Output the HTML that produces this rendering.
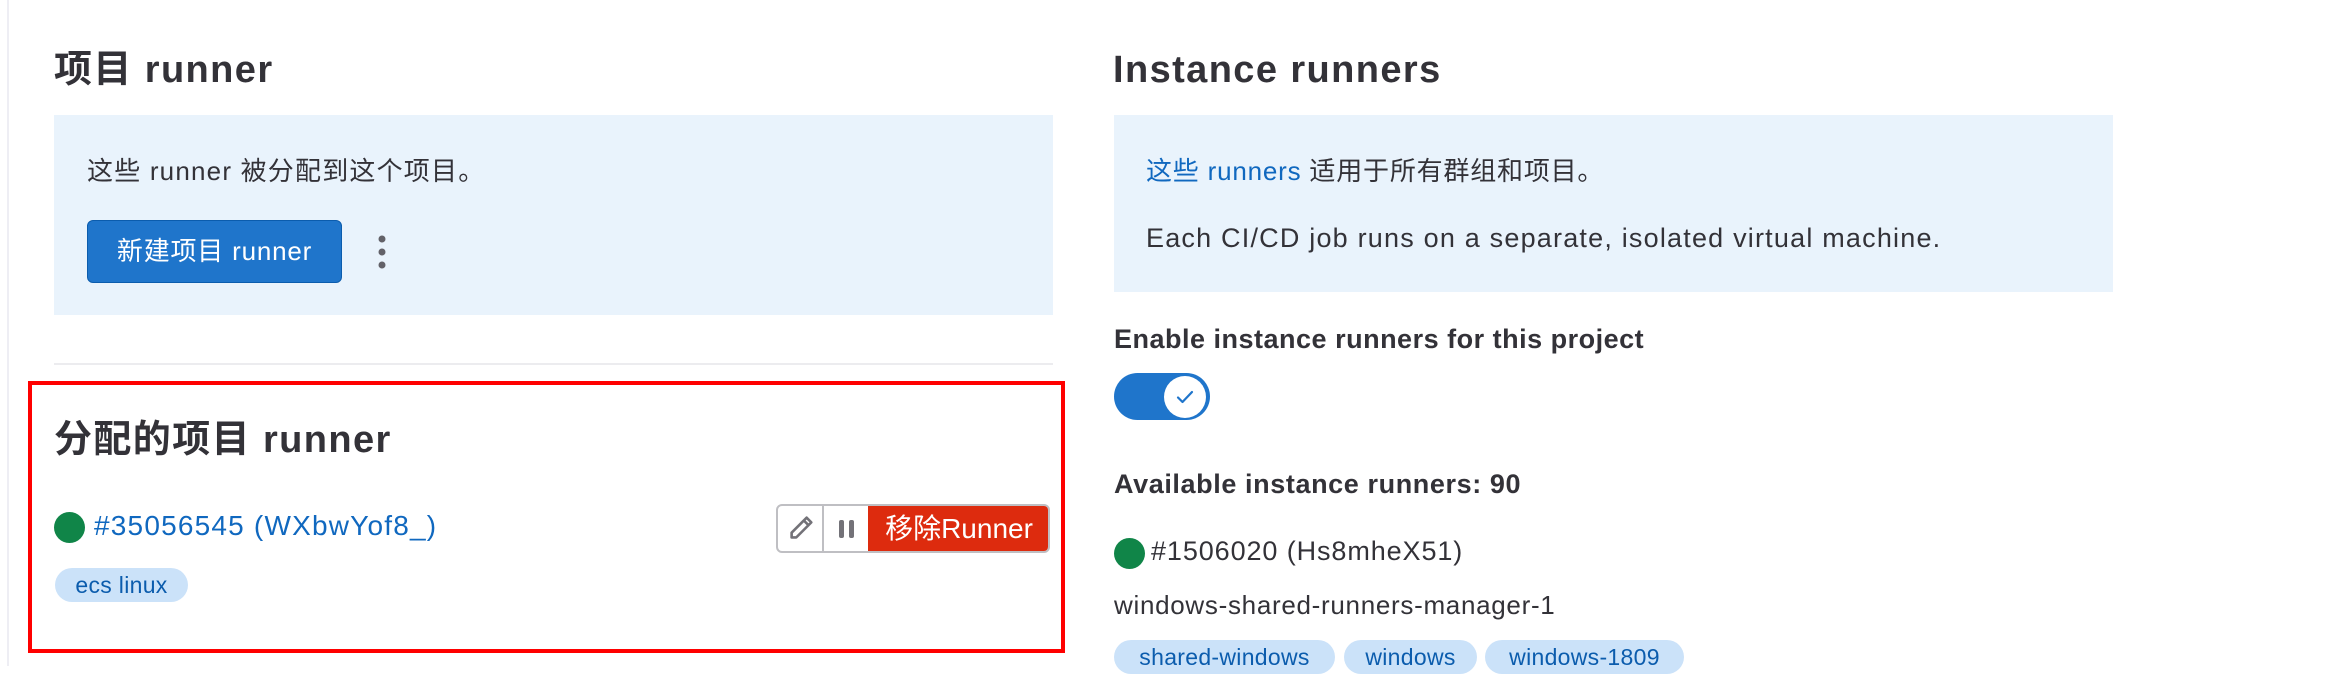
<!DOCTYPE html>
<html><head><meta charset="utf-8"><style>
*{box-sizing:border-box;margin:0;padding:0}
body{width:2344px;height:666px;overflow:hidden;background:#fff;font-family:"Liberation Sans","Noto Sans CJK SC",sans-serif;color:#333238;position:relative;font-size:26px;letter-spacing:.8px}
.a{position:absolute;white-space:nowrap}
h2{font-size:38px;letter-spacing:1.4px;font-weight:bold;position:absolute;white-space:nowrap;line-height:44px}
.box{position:absolute;background:#e9f3fc}
.tag{position:absolute;background:#cbe2f9;color:#0b5cad;border-radius:17px;font-size:23px;letter-spacing:.3px;height:34px;line-height:34px;text-align:center;white-space:nowrap}
.dot{position:absolute;width:31px;height:31px;border-radius:50%;background:#108548}
.lg{font-size:28px;letter-spacing:1.2px}
</style></head><body>
<div style="position:absolute;left:7px;top:0;width:2px;height:666px;background:#eeeef4"></div>

<h2 style="left:54px;top:48px">项目 runner</h2>
<div class="box" style="left:54px;top:115px;width:999px;height:200px"></div>
<div class="a" style="left:87px;top:151px;letter-spacing:1.2px">这些 runner 被分配到这个项目。</div>
<div class="a" style="left:87px;top:220px;width:255px;height:63px;background:#1f75cb;border:1px solid #0b5cad;border-radius:6px;color:#fff;line-height:61px;text-align:center">新建项目 runner</div>
<svg class="a" style="left:374px;top:234px" width="16" height="36"><circle cx="8" cy="5" r="3.5" fill="#626168"/><circle cx="8" cy="18" r="3.5" fill="#626168"/><circle cx="8" cy="31" r="3.5" fill="#626168"/></svg>
<div class="a" style="left:54px;top:363px;width:999px;height:2px;background:#ececef"></div>

<div class="a" style="left:28px;top:381px;width:1037px;height:272px;border:4px solid #f00"></div>
<h2 style="left:54px;top:418px">分配的项目 runner</h2>
<div class="dot" style="left:54px;top:512px"></div>
<div class="a lg" style="left:94px;top:510px;color:#1068bf">#35056545 (WXbwYof8_)</div>
<div class="tag" style="left:55px;top:568px;width:133px">ecs linux</div>
<div class="a" style="left:776px;top:504px;width:274px;height:49px;border:2px solid #bfbfc3;border-radius:6px;overflow:hidden;background:#fff">
 <div class="a" style="left:44px;top:0;width:2px;height:45px;background:#bfbfc3"></div>
 <svg class="a" style="left:8px;top:7px" width="30" height="30" viewBox="0 0 16 16"><path d="M11 2.5l2.5 2.5L5.5 13H3v-2.5z M9.5 4l2.5 2.5" fill="none" stroke="#737278" stroke-width="1.4" stroke-linejoin="round"/></svg>
 <div class="a" style="left:61px;top:14px;width:5px;height:18px;background:#737278;border-radius:2px"></div>
 <div class="a" style="left:71px;top:14px;width:5px;height:18px;background:#737278;border-radius:2px"></div>
 <div class="a" style="left:90px;top:0;width:182px;height:45px;background:#dd2b0e;color:#fff;font-size:28px;letter-spacing:0;line-height:45px;text-align:center">移除Runner</div>
</div>

<h2 style="left:1113px;top:48px">Instance runners</h2>
<div class="box" style="left:1114px;top:115px;width:999px;height:177px"></div>
<div class="a" style="left:1146px;top:151px"><span style="color:#1068bf">这些 runners</span> 适用于所有群组和项目。</div>
<div class="a" style="left:1146px;top:223px;font-size:27px;letter-spacing:1.2px">Each CI/CD job runs on a separate, isolated virtual machine.</div>
<div class="a" style="left:1114px;top:324px;font-weight:bold;font-size:27px;letter-spacing:.5px">Enable instance runners for this project</div>
<div class="a" style="left:1114px;top:373px;width:96px;height:47px;border-radius:24px;background:#1f75cb"></div>
<div class="a" style="left:1164px;top:376px;width:42px;height:42px;border-radius:50%;background:#fff"></div>
<svg class="a" style="left:1173px;top:385px" width="24" height="24" viewBox="0 0 24 24"><path d="M5 12.5l4.5 4.5L19 7" fill="none" stroke="#1f75cb" stroke-width="2.2" stroke-linecap="round" stroke-linejoin="round"/></svg>
<div class="a" style="left:1114px;top:469px;font-weight:bold;font-size:27px;letter-spacing:.6px">Available instance runners: 90</div>
<div class="dot" style="left:1114px;top:538px"></div>
<div class="a" style="left:1151px;top:536px;font-size:27px;letter-spacing:.9px">#1506020 (Hs8mheX51)</div>
<div class="a" style="left:1114px;top:590px;font-size:26px;letter-spacing:.7px">windows-shared-runners-manager-1</div>
<div class="tag" style="left:1114px;top:640px;width:221px">shared-windows</div>
<div class="tag" style="left:1344px;top:640px;width:133px">windows</div>
<div class="tag" style="left:1485px;top:640px;width:199px">windows-1809</div>
</body></html>
